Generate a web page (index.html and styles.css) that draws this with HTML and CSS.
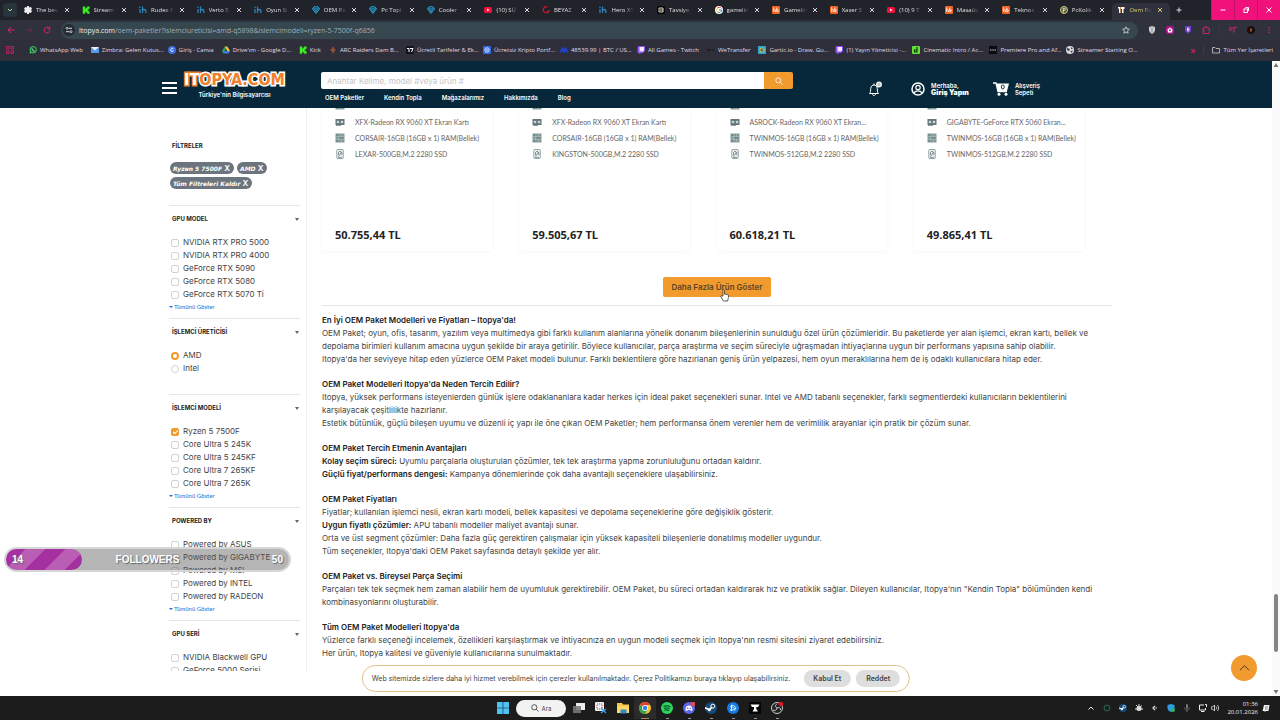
FILE: index.html
```html
<!DOCTYPE html>
<html lang="tr">

<head>
    <meta charset="utf-8">
    <title>Oem Paketler</title>
    <link rel="stylesheet" href="styles.css">
</head>

<body>
    <!-- shared icons -->
    <svg class="defs">
        <symbol id="ih" viewBox="0 0 8 8"><path d="M1 3v4M3.500 .5v6.500M3.500 4.500c.6-1.300 3.300-1.500 3.300.3V7" fill="none" stroke="#2b83b8" stroke-width="1.300"/><circle cx="1" cy="1.200" r=".8" fill="#2b83b8"/></symbol>
        <symbol id="gem" viewBox="0 0 8 8"><path d="M2 .8h4l1.500 2L4 7.500.5 2.800z" fill="#16384a" stroke="#2f9fd0"/><path d="M.5 2.800h7M2.500 3L4 6l1.500-3" fill="none" stroke="#2f9fd0" stroke-width=".8"/></symbol>
        <symbol id="yt" viewBox="0 0 8 8"><rect y="1" width="8" height="6" rx="1.500" fill="#f1103c"/><path d="M3.200 2.600L5.500 4 3.200 5.400z" fill="#fff"/></symbol>
        <symbol id="hb" viewBox="0 0 8 8"><rect width="8" height="8" rx="1" fill="#f26322"/><path d="M1.700 1.500V6M1.700 4c1.500-1 1.800 0 1.800 2M4.800 1.500V6M4.800 3.800c2.300-.8 2.300 2.200 0 1.900" stroke="#fff" stroke-width=".8" fill="none"/></symbol>
        <symbol id="kick" viewBox="0 0 8 8"><path d="M.8.5h2.400v2h1v-1h1v-1h2.400v2.300h-1v1h-1v.6h1v1h1v2.300H5.200v-1h-1v-1h-1v2H.8z" fill="#3df01f"/></symbol>
        <symbol id="chrome" viewBox="0 0 16 16"><circle cx="8" cy="8" r="8" fill="#f2c431"/><path d="M8 8L1.100 4A8 8 0 0 1 14.900 4H8z" fill="#e43e30"/><path d="M8 8L1.100 4A8 8 0 0 0 8 16l3.500-6z" fill="#2fa24f"/><circle cx="8" cy="8" r="4" fill="#fff"/><circle cx="8" cy="8" r="3" fill="#3f7fe8"/></symbol>
        <symbol id="twitch" viewBox="0 0 8 8"><path d="M1.500 0H8v5L6 7H4L3 8H2V7H.5V1.500z" fill="#8d4df5"/><path d="M2.500 1H7v3.500L6 5.500H2.500z" fill="#f3eaff"/></symbol>
        <symbol id="cross" viewBox="0 0 8 8"><path d="M2 2l4 4M6 2L2 6" stroke="currentColor" fill="none"/></symbol>
        <symbol id="gpu" viewBox="0 0 10 10"><rect x=".5" y="2" width="9" height="6" fill="#63777c"/><path d="M1 8.500h5" stroke="#8b9a9d"/><circle cx="3" cy="5" r="1.300" fill="#cdd8d9"/><circle cx="7" cy="5" r="1.300" fill="#cdd8d9"/></symbol>
        <symbol id="ram" viewBox="0 0 10 10"><rect x=".5" y=".5" width="9" height="9" fill="#839a9b"/><path d="M0 3.500h10M0 6.500h10M3.500 1v8M6.500 1v8" stroke="#b4c4c3" stroke-width=".5"/><path d="M1.500 2h2M5 5h3M1.500 8h2" stroke="#5b7375"/></symbol>
        <symbol id="ssd" viewBox="0 0 10 10"><rect x="1.800" y=".5" width="6.500" height="9" rx=".8" fill="#edf1f1" stroke="#7e8f92" stroke-width=".8"/><path d="M3.500 6V3.500L5 2l1.800 1.500V6M6.500 3L3.500 7.500M3 8.300h4" fill="none" stroke="#63777c" stroke-width=".8"/></symbol>
        <symbol id="steam" viewBox="0 0 12 12"><circle cx="6" cy="6" r="6" fill="#164a78"/><circle cx="7.800" cy="4.200" r="2" fill="none" stroke="#fff"/><circle cx="4.300" cy="7.800" r="1.500" fill="#fff"/><path d="M0 5.800l4.500 2L7 5" stroke="#fff" stroke-width="1.600" fill="none"/></symbol>
    </svg>

    <div class="tabs">
        <button class="tab-search" aria-label="Sekme ara"><svg viewBox="0 0 8 8"><path d="M2 3l2 2 2-2" stroke="#c5d98c" fill="none"/></svg></button>
        <div class="tab-list">
            <div class="tab"><svg viewBox="0 0 8 8"><path d="M3 0h2v1.500L7 1l1 2-1 1 1 1.500L6.500 7 5 6.500V8H3V6.500L1 7 0 5l1-1-1-1.500L1.500 1 3 1.500z" fill="#eee"/></svg><span>The bes</span><button aria-label="Kapat"><svg><use href="#cross"/></svg></button></div>
            <div class="tab"><svg><use href="#kick"/></svg><span>Stream</span><button aria-label="Kapat"><svg><use href="#cross"/></svg></button></div>
            <div class="tab"><svg><use href="#ih"/></svg><span>Rudex P</span><button aria-label="Kapat"><svg><use href="#cross"/></svg></button></div>
            <div class="tab"><svg><use href="#ih"/></svg><span>Verto 5</span><button aria-label="Kapat"><svg><use href="#cross"/></svg></button></div>
            <div class="tab"><svg><use href="#ih"/></svg><span>Oyun Si</span><button aria-label="Kapat"><svg><use href="#cross"/></svg></button></div>
            <div class="tab"><svg><use href="#gem"/></svg><span>OEM Pa</span><button aria-label="Kapat"><svg><use href="#cross"/></svg></button></div>
            <div class="tab"><svg><use href="#gem"/></svg><span>Pc Topl</span><button aria-label="Kapat"><svg><use href="#cross"/></svg></button></div>
            <div class="tab"><svg><use href="#gem"/></svg><span>Cooler</span><button aria-label="Kapat"><svg><use href="#cross"/></svg></button></div>
            <div class="tab"><svg><use href="#yt"/></svg><span>(10) SÜ</span><button aria-label="Kapat"><svg><use href="#cross"/></svg></button></div>
            <div class="tab"><svg viewBox="0 0 8 8"><path d="M5.500 1A3 3 0 1 0 7 5L5 6M3 1l2-1" stroke="#d4142e" stroke-width="1.200" fill="none"/></svg><span>BEYAZ</span><button aria-label="Kapat"><svg><use href="#cross"/></svg></button></div>
            <div class="tab"><svg><use href="#ih"/></svg><span>Hero X1</span><button aria-label="Kapat"><svg><use href="#cross"/></svg></button></div>
            <div class="tab"><svg viewBox="0 0 8 8"><rect width="8" height="8" rx="2" fill="#000"/><path d="M2 2h4v4H2zM3 4h3" stroke="#e9dfc9" fill="none"/></svg><span>Tavsiye</span><button aria-label="Kapat"><svg><use href="#cross"/></svg></button></div>
            <div class="tab"><svg viewBox="0 0 8 8"><circle cx="4" cy="4" r="4" fill="#fff"/><path d="M6.500 2.500A2.700 2.700 0 0 0 2 2.500" stroke="#e43e30" fill="none"/><path d="M1.500 3v2" stroke="#f2c431"/><path d="M2 5.500a2.700 2.700 0 0 0 3.500.7" stroke="#2fa24f" fill="none"/><path d="M6 6l.8-2H4" stroke="#3f7fe8" fill="none"/></svg><span>gamelin</span><button aria-label="Kapat"><svg><use href="#cross"/></svg></button></div>
            <div class="tab"><svg><use href="#hb"/></svg><span>Gamelin</span><button aria-label="Kapat"><svg><use href="#cross"/></svg></button></div>
            <div class="tab"><svg><use href="#hb"/></svg><span>Xaser S</span><button aria-label="Kapat"><svg><use href="#cross"/></svg></button></div>
            <div class="tab"><svg><use href="#yt"/></svg><span>(10) 9 T</span><button aria-label="Kapat"><svg><use href="#cross"/></svg></button></div>
            <div class="tab"><svg><use href="#hb"/></svg><span>Masaüs</span><button aria-label="Kapat"><svg><use href="#cross"/></svg></button></div>
            <div class="tab"><svg><use href="#hb"/></svg><span>Teknoc</span><button aria-label="Kapat"><svg><use href="#cross"/></svg></button></div>
            <div class="tab"><svg viewBox="0 0 8 8"><circle cx="4" cy="4" r="3.500" fill="#55582e" stroke="#c9cc8d"/><path d="M3.300 6.500V2.300h1c1.500 0 1.500 2 0 2h-1" stroke="#fff" stroke-width=".8" fill="none"/></svg><span>PcKolik</span><button aria-label="Kapat"><svg><use href="#cross"/></svg></button></div>
            <div class="tab active"><svg viewBox="0 0 8 8"><path d="M1 1h2.500v6H2V2.500H1zM4 1h3.500v2H6.500v4H5V3H4z" fill="#fff"/><path d="M3.500 1v6" stroke="#ef7d21" stroke-width=".6"/></svg><span>Oem Pa</span><button aria-label="Kapat"><svg><use href="#cross"/></svg></button></div>
        </div>
        <button class="new-tab" aria-label="Yeni sekme"><svg viewBox="0 0 8 8"><path d="M4 1.500v5M1.500 4h5" stroke="#ddd"/></svg></button>
        <div class="win-btns">
            <button aria-label="Küçült"><svg viewBox="0 0 8 8"><path d="M1.500 4h5" stroke="#fff"/></svg></button>
            <button aria-label="Önceki boyut"><svg viewBox="0 0 8 8"><rect x="2" y="3" width="3.500" height="3.500" fill="none" stroke="#fff"/><path d="M3.500 1.500h3v3.500" fill="none" stroke="#fff"/></svg></button>
            <button aria-label="Kapat"><svg viewBox="0 0 8 8"><path d="M1.500 1.500l5 5M6.500 1.500l-5 5" stroke="#fff"/></svg></button>
        </div>
    </div>

    <div class="toolbar">
        <button aria-label="Geri"><svg viewBox="0 0 8 8"><path d="M7.500 4H1M4 1L1 4l3 3" stroke="#e0226a" fill="none"/></svg></button>
        <button aria-label="İleri"><svg viewBox="0 0 8 8"><path d="M.5 4H7M4 1l3 3-3 3" stroke="#6b2a4a" fill="none"/></svg></button>
        <button aria-label="Yenile"><svg viewBox="0 0 8 8"><path d="M6.800 4.500A2.900 2.900 0 1 1 6 2M6.800.5V3H4.300" stroke="#e0226a" fill="none"/></svg></button>
        <div class="omnibox">
            <svg class="site-info" viewBox="0 0 12 12"><circle cx="6" cy="6" r="6" fill="#232b33"/><path d="M5.500 4.300H9M3 7.700h3.500" stroke="#ddd"/><circle cx="4" cy="4.300" r="1" fill="none" stroke="#ddd" stroke-width=".8"/><circle cx="8" cy="7.700" r="1" fill="none" stroke="#ddd" stroke-width=".8"/></svg>
            <span class="url"><b>itopya.com</b>/oem-paketler?islemciureticisi=amd-q5898&amp;islemcimodeli=ryzen-5-7500f-q6856</span>
            <svg class="star" viewBox="0 0 8 8"><path d="M4 .8l1 2.200 2.400.2-1.800 1.600.5 2.400L4 6 1.900 7.200l.5-2.400L.6 3.200 3 3z" fill="none" stroke="#ddd" stroke-width=".8"/></svg>
        </div>
        <div class="extensions">
            <svg viewBox="0 0 8 8"><path d="M4 0l3 1v3c0 2-1.500 3.300-3 4-1.500-.7-3-2-3-4V1z" fill="#c9ccd0"/><path d="M4 1v6" stroke="#92979c"/></svg>
            <svg viewBox="0 0 8 8"><rect width="8" height="8" rx="2" fill="#b3128c"/><path d="M1.500 3.500L4 1.500l2.500 2-.5 3H2z" fill="#fff"/><circle cx="4" cy="4.300" r="1" fill="#b3128c"/></svg>
            <svg viewBox="0 0 8 8"><path d="M1 0h6v5L4 8 1 5z" fill="#6a3ec9"/><path d="M5.500 2h-2v3h2M3.500 3.500h2" stroke="#fff" fill="none" stroke-width=".8"/></svg>
            <svg viewBox="0 0 8 8"><path d="M1 2h2V.8h2V2h2v2h.7v1.500H7v2H1V5.300h1V4H1z" fill="none" stroke="#e0226a" stroke-width=".9"/></svg>
            <i class="bar"></i>
            <svg viewBox="0 0 8 8"><path d="M0 2h4M0 4h3M5 6V1.500h2.500M4 6h1" stroke="#e0226a" fill="none"/></svg>
            <svg viewBox="0 0 8 8"><circle cx="4" cy="4" r="4" fill="#170e0e"/><path d="M4 1.500l1 2-1 3-1-2z" fill="#d5512c"/></svg>
            <svg viewBox="0 0 8 8"><path d="M4 1v1.200M4 3.400v1.200M4 5.800V7" stroke="#e0226a" stroke-width="1.200"/></svg>
        </div>
    </div>

    <div class="bookmarks">
        <svg class="apps" viewBox="0 0 8 8"><path d="M.5.500h2.500v2.500H.5zM5 .5h2.500v2.500H5zM.5 5h2.500v2.500H.5zM5 5h2.500v2.500H5z" fill="none" stroke="#c0205e"/></svg>
        <a href="#"><svg viewBox="0 0 8 8"><circle cx="4.200" cy="3.800" r="3.200" fill="#174d2b" stroke="#3bd366"/><path d="M.5 7.700l.8-2.500 1.500 1.500z" fill="#3bd366"/><path d="M3 2.500c0 1.500 1 2.500 2.500 2.700" stroke="#fff" fill="none"/></svg>WhatsApp Web</a>
        <a href="#" class="wide"><svg viewBox="0 0 8 8"><rect y="1" width="8" height="6" fill="#5899e8"/><path d="M0 1l4 3.500L8 1z" fill="#e8f0fb"/></svg>Zimbra: Gelen Kutus...</a>
        <a href="#"><svg viewBox="0 0 8 8"><circle cx="4" cy="4" r="4" fill="#3b70e4"/><path d="M5.500 3c-1.500-2-3 0-2.700 1.500.3 1.500 2 1.200 2.700 0" stroke="#fff" fill="none"/></svg>Giriş - Canva</a>
        <a href="#" class="wide"><svg viewBox="0 0 8 8"><path d="M2.700.5h2.600L8 5H5.300z" fill="#f6c332"/><path d="M2.700.5L0 5l1.300 2.500L4 3z" fill="#25a35a"/><path d="M1.300 7.500L2.700 5H8L6.700 7.500z" fill="#437ce8"/></svg>Drive'ım - Google D...</a>
        <a href="#"><svg><use href="#kick"/></svg>Kick</a>
        <a href="#" class="wide"><svg viewBox="0 0 8 8"><path d="M4 0l1.500 3L7 4 5.500 5 4 8 2.500 5 1 4l1.500-1z" fill="#94502f"/></svg>ARC Raiders Dam B...</a>
        <a href="#" class="wide"><svg viewBox="0 0 8 8"><rect width="8" height="8" rx="1" fill="#11151d"/><path d="M1 2.500h2V6M4 2.500h3L5.500 6" stroke="#fff" fill="none"/></svg>Ücretli Tarifeler &amp; Ek...</a>
        <a href="#" class="wide"><svg viewBox="0 0 8 8"><rect width="8" height="8" rx="1" fill="#3468e8"/><circle cx="4" cy="4" r="2.200" fill="none" stroke="#dce7ff"/><circle cx="4" cy="4" r=".8" fill="#fff"/></svg>Ücretsiz Kripto Portf...</a>
        <a href="#" class="wide"><svg viewBox="0 0 8 8"><path d="M.5 6.500l2-4 1.500 3 1.500-3 2 4" stroke="#1d45dd" stroke-width="1.800" fill="none"/></svg>48539.99 | BTC / US...</a>
        <a href="#"><svg><use href="#twitch"/></svg>All Games - Twitch</a>
        <a href="#"><svg viewBox="0 0 8 8"><path d="M0 3l1 2 1-2 1 2 1-2M5 4h2.500" stroke="#191b24" fill="none"/></svg>WeTransfer</a>
        <a href="#" class="wide"><svg viewBox="0 0 8 8"><rect width="8" height="8" fill="#29a6d1"/><circle cx="4" cy="4" r="2.500" fill="#f3c22e"/><path d="M5.500 3H3v2h2V4" stroke="#1d5687" fill="none"/></svg>Gartic.io - Draw, Gu...</a>
        <a href="#" class="wide"><svg><use href="#twitch"/></svg>(1) Yayın Yöneticisi -...</a>
        <a href="#" class="wide"><svg viewBox="0 0 8 8"><rect width="8" height="8" rx="1" fill="#62e336"/><path d="M5 1v5H2.500V4H5" stroke="#123a0d" stroke-width="1.200" fill="none"/></svg>Cinematic Intro / Ac...</a>
        <a href="#" class="wide"><svg viewBox="0 0 8 8"><rect width="8" height="8" fill="#090a10"/><path d="M1 4h1.500M3.300 4h1.400M5.500 4H7" stroke="#ddd"/></svg>Premiere Pro and Af...</a>
        <a href="#" class="wide"><svg viewBox="0 0 8 8"><circle cx="4" cy="4" r="4" fill="#d6d8dc"/><path d="M1 2l2 .5L4 4 2.500 5 1 4zM5 1l2 2H5zM4.500 5L7 4.500 5.500 7z" fill="#42464f"/></svg>Streamer Starting O...</a>
        <span class="more-bm">»</span>
        <i class="bar"></i>
        <a href="#" class="last"><svg viewBox="0 0 8 8"><path d="M.5 1.500h2.500l1 1h3.500V7h-7z" fill="none" stroke="#ccc" stroke-width=".8"/></svg>Tüm Yer İşaretleri</a>
    </div>

    <div class="viewport">
        <div class="page">
            <header>
                <button class="menu" aria-label="Menü"><i></i><i></i><i></i></button>
                <a href="#" class="logo"><span class="logo-name"><em>IT</em>OPYA.COM</span><span class="slogan">Türkiye'nin Bilgisayarcısı</span></a>
                <div class="search-col">
                    <form class="search">
                        <input type="text" aria-label="Ara" placeholder="Anahtar Kelime, model #veya ürün #">
                        <button type="button" aria-label="Ara"><svg viewBox="0 0 8 8"><circle cx="3.300" cy="3.300" r="2.500" fill="none" stroke="#fff" stroke-width=".8"/><path d="M5.200 5.200l2.300 2.300" stroke="#fff" stroke-width=".8"/></svg></button>
                    </form>
                    <nav>
                        <a href="#">OEM Paketler</a>
                        <a href="#">Kendin Topla</a>
                        <a href="#">Mağazalarımız</a>
                        <a href="#">Hakkımızda</a>
                        <a href="#">Blog</a>
                    </nav>
                </div>
                <div class="actions">
                    <svg class="bell" viewBox="0 0 16 16"><path d="M2.500 12.500c1.500-1.500 1-3 1.200-5C4 5 5.500 4 7 4s3 1 3.300 3.500c.2 2-.3 3.500 1.200 5zM5.500 13c.3 2 2.700 2 3 0M7 4V2.500" fill="none" stroke="#fff"/><circle cx="12" cy="3.500" r="3" fill="#e8edef"/><circle cx="12" cy="3.500" r="1" fill="none" stroke="#8b9aa2" stroke-width=".7"/></svg>
                    <a href="#" class="login"><svg viewBox="0 0 14 14"><circle cx="7" cy="7" r="6" fill="none" stroke="#fff" stroke-width="1.500"/><circle cx="7" cy="5.500" r="2.200" fill="none" stroke="#fff" stroke-width="1.200"/><path d="M3 11c1.500-2.800 6.500-2.800 8 0" fill="none" stroke="#fff" stroke-width="1.200"/></svg><span>Merhaba,<br><b>Giriş Yapın</b></span></a>
                    <a href="#" class="basket"><svg viewBox="0 0 16 14"><path d="M0 1h3l2 8.500h9" fill="none" stroke="#fff" stroke-width="1.400"/><path d="M3.500 1.500H16L14 9H5z" fill="#fff"/><circle cx="6" cy="12.300" r="1.500" fill="#fff"/><circle cx="13" cy="12.300" r="1.500" fill="#fff"/><ellipse cx="9.800" cy="5" rx="1.500" ry="2" fill="none" stroke="#06283a" stroke-width=".9"/></svg><span>Alışveriş<br>Sepeti</span></a>
                </div>
            </header>

            <div class="container">
                <aside>
                    <h3 class="filter-title">FİLTRELER</h3>
                    <div class="tags">
                        <button>Ryzen 5 7500F <b>X</b></button>
                        <button>AMD <b>X</b></button>
                        <button>Tüm Filtreleri Kaldır <b>X</b></button>
                    </div>
                    <section>
                        <h3>GPU MODEL <i></i></h3>
                        <label><input type="checkbox">NVIDIA RTX PRO 5000</label>
                        <label><input type="checkbox">NVIDIA RTX PRO 4000</label>
                        <label><input type="checkbox">GeForce RTX 5090</label>
                        <label><input type="checkbox">GeForce RTX 5080</label>
                        <label><input type="checkbox">GeForce RTX 5070 Ti</label>
                        <a href="#" class="show-all">Tümünü Göster</a>
                    </section>
                    <section class="short">
                        <h3>İŞLEMCİ ÜRETİCİSİ <i></i></h3>
                        <label><input type="radio" name="cpu" checked>AMD</label>
                        <label><input type="radio" name="cpu">Intel</label>
                    </section>
                    <section>
                        <h3>İŞLEMCİ MODELİ <i></i></h3>
                        <label><input type="checkbox" checked>Ryzen 5 7500F</label>
                        <label><input type="checkbox">Core Ultra 5 245K</label>
                        <label><input type="checkbox">Core Ultra 5 245KF</label>
                        <label><input type="checkbox">Core Ultra 7 265KF</label>
                        <label><input type="checkbox">Core Ultra 7 265K</label>
                        <a href="#" class="show-all">Tümünü Göster</a>
                    </section>
                    <section>
                        <h3>POWERED BY <i></i></h3>
                        <label><input type="checkbox">Powered by ASUS</label>
                        <label><input type="checkbox">Powered by GIGABYTE</label>
                        <label><input type="checkbox">Powered by MSI</label>
                        <label><input type="checkbox">Powered by INTEL</label>
                        <label><input type="checkbox">Powered by RADEON</label>
                        <a href="#" class="show-all">Tümünü Göster</a>
                    </section>
                    <section>
                        <h3>GPU SERİ <i></i></h3>
                        <label><input type="checkbox">NVIDIA Blackwell GPU</label>
                        <label><input type="checkbox">GeForce 5000 Serisi</label>
                    </section>
                </aside>

                <main>
                    <div class="products">
                        <div class="card">
                            <ul>
                                <li class="cut"><svg><use href="#ram"/></svg></li>
                                <li><svg><use href="#gpu"/></svg>XFX-Radeon RX 9060 XT Ekran Kartı</li>
                                <li><svg><use href="#ram"/></svg>CORSAIR-16GB (16GB x 1) RAM(Bellek)</li>
                                <li><svg><use href="#ssd"/></svg>LEXAR-500GB,M.2 2280 SSD</li>
                            </ul>
                            <div class="price">50.755,44 TL</div>
                        </div>
                        <div class="card">
                            <ul>
                                <li class="cut"><svg><use href="#ram"/></svg></li>
                                <li><svg><use href="#gpu"/></svg>XFX-Radeon RX 9060 XT Ekran Kartı</li>
                                <li><svg><use href="#ram"/></svg>CORSAIR-16GB (16GB x 1) RAM(Bellek)</li>
                                <li><svg><use href="#ssd"/></svg>KINGSTON-500GB,M.2 2280 SSD</li>
                            </ul>
                            <div class="price">59.505,67 TL</div>
                        </div>
                        <div class="card">
                            <ul>
                                <li class="cut"><svg><use href="#ram"/></svg></li>
                                <li><svg><use href="#gpu"/></svg>ASROCK-Radeon RX 9060 XT Ekran...</li>
                                <li><svg><use href="#ram"/></svg>TWINMOS-16GB (16GB x 1) RAM(Bellek)</li>
                                <li><svg><use href="#ssd"/></svg>TWINMOS-512GB,M.2 2280 SSD</li>
                            </ul>
                            <div class="price">60.618,21 TL</div>
                        </div>
                        <div class="card">
                            <ul>
                                <li class="cut"><svg><use href="#ram"/></svg></li>
                                <li><svg><use href="#gpu"/></svg>GIGABYTE-GeForce RTX 5060 Ekran...</li>
                                <li><svg><use href="#ram"/></svg>TWINMOS-16GB (16GB x 1) RAM(Bellek)</li>
                                <li><svg><use href="#ssd"/></svg>TWINMOS-512GB,M.2 2280 SSD</li>
                            </ul>
                            <div class="price">49.865,41 TL</div>
                        </div>
                    </div>

                    <div class="load-more">
                        <button>Daha Fazla Ürün Göster
                            <svg class="cursor" viewBox="0 0 9 13"><path d="M3 7V1.500c0-1.300 1.500-1.300 1.500 0V5l3 .6c.8.200 1 .7 1 1.500 0 2-.5 2.500-.8 4.900H3.500C3 10.500 1.500 9.500.7 7.700c-.3-.9.800-1.200 1.300-.5z" fill="#fff" stroke="#333" stroke-width=".8"/></svg>
                        </button>
                    </div>

                    <article>
                        <h2>En İyi OEM Paket Modelleri ve Fiyatları – Itopya'da!</h2>
                        <p>OEM Paket; oyun, ofis, tasarım, yazılım veya multimedya gibi farklı kullanım alanlarına yönelik donanım bileşenlerinin sunulduğu özel ürün çözümleridir. Bu paketlerde yer alan işlemci, ekran kartı, bellek ve<br>depolama birimleri kullanım amacına uygun şekilde bir araya getirilir. Böylece kullanıcılar, parça araştırma ve seçim süreciyle uğraşmadan ihtiyaçlarına uygun bir performans yapısına sahip olabilir.<br>Itopya'da her seviyeye hitap eden yüzlerce OEM Paket modeli bulunur. Farklı beklentilere göre hazırlanan geniş ürün yelpazesi, hem oyun meraklılarına hem de iş odaklı kullanıcılara hitap eder.</p>
                        <h2>OEM Paket Modelleri Itopya'da Neden Tercih Edilir?</h2>
                        <p>Itopya, yüksek performans isteyenlerden günlük işlere odaklananlara kadar herkes için ideal paket seçenekleri sunar. Intel ve AMD tabanlı seçenekler, farklı segmentlerdeki kullanıcıların beklentilerini<br>karşılayacak çeşitlilikte hazırlanır.<br>Estetik bütünlük, güçlü bileşen uyumu ve düzenli iç yapı ile öne çıkan OEM Paketler; hem performansa önem verenler hem de verimlilik arayanlar için pratik bir çözüm sunar.</p>
                        <h2>OEM Paket Tercih Etmenin Avantajları</h2>
                        <p><b>Kolay seçim süreci:</b> Uyumlu parçalarla oluşturulan çözümler, tek tek araştırma yapma zorunluluğunu ortadan kaldırır.<br><b>Güçlü fiyat/performans dengesi:</b> Kampanya dönemlerinde çok daha avantajlı seçeneklere ulaşabilirsiniz.</p>
                        <h2>OEM Paket Fiyatları</h2>
                        <p>Fiyatlar; kullanılan işlemci nesli, ekran kartı modeli, bellek kapasitesi ve depolama seçeneklerine göre değişiklik gösterir.<br><b>Uygun fiyatlı çözümler:</b> APU tabanlı modeller maliyet avantajı sunar.<br>Orta ve üst segment çözümler: Daha fazla güç gerektiren çalışmalar için yüksek kapasiteli bileşenlerle donatılmış modeller uygundur.<br>Tüm seçenekler, Itopya'daki OEM Paket sayfasında detaylı şekilde yer alır.</p>
                        <h2>OEM Paket vs. Bireysel Parça Seçimi</h2>
                        <p>Parçaları tek tek seçmek hem zaman alabilir hem de uyumluluk gerektirebilir. OEM Paket, bu süreci ortadan kaldırarak hız ve pratiklik sağlar. Dileyen kullanıcılar, Itopya'nın "Kendin Topla" bölümünden kendi<br>kombinasyonlarını oluşturabilir.</p>
                        <h2>Tüm OEM Paket Modelleri Itopya'da</h2>
                        <p>Yüzlerce farklı seçeneği incelemek, özellikleri karşılaştırmak ve ihtiyacınıza en uygun modeli seçmek için Itopya'nın resmi sitesini ziyaret edebilirsiniz.<br>Her ürün, Itopya kalitesi ve güveniyle kullanıcılarına sunulmaktadır.</p>
                    </article>
                </main>
            </div>

            <div class="cookie">
                <p>Web sitemizde sizlere daha iyi hizmet verebilmek için çerezler kullanılmaktadır. Çerez Politikamızı buraya tıklayıp ulaşabilirsiniz.</p>
                <button>Kabul Et</button>
                <button>Reddet</button>
            </div>
            <button class="to-top" aria-label="Yukarı"><svg viewBox="0 0 12 8"><path d="M1 6.500l5-5 5 5" fill="none" stroke="#333"/></svg></button>
        </div>
        <div class="scrollbar">
            <svg viewBox="0 0 8 8"><path d="M4 2l2.500 4h-5z" fill="#777"/></svg>
            <i class="thumb"></i>
            <svg viewBox="0 0 8 8"><path d="M4 6L1.500 2h5z" fill="#777"/></svg>
        </div>

        <!-- stream goal overlay -->
        <div class="goal">
            <div class="goal-fill"></div>
            <span>14</span><span>FOLLOWERS</span><span>50</span>
        </div>
    </div>

    <div class="taskbar">
        <div class="task-icons">
            <button aria-label="Başlat"><svg viewBox="0 0 12 12"><path d="M0 0h5.700v5.700H0zM6.300 0H12v5.700H6.300zM0 6.300h5.700V12H0zM6.300 6.300H12V12H6.300z" fill="#4cc2f5"/></svg></button>
            <button class="task-search"><svg viewBox="0 0 8 8"><circle cx="3.300" cy="3.300" r="2.600" fill="none" stroke="#333" stroke-width=".8"/><path d="M5.200 5.200l2.300 2.300" stroke="#333" stroke-width=".8"/></svg>Ara</button>
            <button aria-label="Görev görünümü"><svg viewBox="0 0 12 12"><rect x="3" y="1" width="9" height="7" fill="#eee"/><rect y="4" width="8" height="7" fill="#777" opacity=".9"/></svg></button>
            <button aria-label="Ekran Alıntısı"><svg viewBox="0 0 12 12"><rect width="9" height="9" rx="1" fill="#eee"/><path d="M2 2h5v5H2z" fill="none" stroke="#c83c50" stroke-dasharray="1"/><path d="M6 6l5 5M11 7l-5 4" stroke="#38a0dd" stroke-width="1.400"/></svg></button>
            <button aria-label="Dosya Gezgini"><svg viewBox="0 0 12 12"><path d="M0 1h5l1 1.500h6V11H0z" fill="#f6c749"/><path d="M0 4h12v7H0z" fill="#fbd766"/><rect x="3.500" y="7.500" width="6" height="4" fill="#2d8ad0"/></svg></button>
            <button class="current" aria-label="Chrome"><svg><use href="#chrome"/></svg></button>
            <button class="open" aria-label="Spotify"><svg viewBox="0 0 12 12"><circle cx="6" cy="6" r="6" fill="#27d75f"/><path d="M2.500 4.300c2.500-.8 5-.5 7 .6M3 6.300c2-.6 4-.4 5.700.6M3.500 8.200c1.600-.5 3.200-.3 4.500.4" stroke="#102b18" fill="none"/></svg></button>
            <button class="open" aria-label="Discord"><svg viewBox="0 0 12 12"><circle cx="6" cy="6" r="6" fill="#5d67ee"/><path d="M2.500 8.500C2.500 5 3.500 3.500 6 3.500s3.500 1.500 3.500 5L8 9l-.7-1H4.700L4 9z" fill="#fff"/><circle cx="4.700" cy="6.300" r=".8" fill="#5d67ee"/><circle cx="7.300" cy="6.300" r=".8" fill="#5d67ee"/><circle cx="10" cy="2" r="2.500" fill="#e4485a"/></svg></button>
            <button class="open" aria-label="Steam"><svg><use href="#steam"/></svg></button>
            <button class="open" aria-label="Battle.net"><svg viewBox="0 0 12 12"><circle cx="6" cy="6" r="6" fill="#157be0"/><path d="M4.500 9V3c3 .5 4 2 4.500 3-1 1.500-2.500 2.300-6 2M3 5c2-1 4.500.5 5 3.500" fill="none" stroke="#e4f4ff"/></svg></button>
            <button class="open" aria-label="Oyun"><svg viewBox="0 0 12 12"><rect width="12" height="12" rx="1" fill="#050505"/><path d="M1.500 2.500h9L9 5H7.300v2L9 9.500H3.500L5 7V5H3z" fill="#fff"/></svg></button>
            <button class="open" aria-label="OBS"><svg viewBox="0 0 12 12"><circle cx="6" cy="6" r="5.500" fill="#222" stroke="#ccc"/><path d="M6 6c-2-1-2-3 0-4M6 6c2-1.200 4 0 3.500 2M6 6c0 2-2.500 3.300-4 2" fill="none" stroke="#ccc"/><circle cx="9.800" cy="2" r="2.300" fill="#e81123"/></svg></button>
        </div>
        <div class="tray">
            <svg viewBox="0 0 8 8"><path d="M1.500 5.500L4 3l2.500 2.500" stroke="#eee" fill="none"/></svg>
            <svg viewBox="0 0 8 8"><circle cx="4" cy="4" r="3" fill="#17251f" stroke="#28634a"/></svg>
            <svg><use href="#steam"/></svg>
            <svg viewBox="0 0 8 8"><circle cx="4" cy="4.500" r="2.500" fill="#ddd"/><path d="M1 1l2 2M7 1.500L5 3M0 5h2M8 5H6M4 0v2" stroke="#ddd"/></svg>
            <svg viewBox="0 0 8 8"><path d="M4 2L2 4l2 2M4.500 4H6" stroke="#eee" stroke-width="1.200" fill="none"/></svg>
            <svg viewBox="0 0 8 8"><path d="M4 0l3.500 1v3c0 2-1.500 3-3.500 4C2 7 .5 6 .5 4V1z" fill="#2c9de0"/><circle cx="6" cy="6" r="2" fill="#34b455"/></svg>
            <svg viewBox="0 0 8 8"><rect x="3" y="0" width="2" height="5" rx="1" fill="#777"/><path d="M1.500 3.500c0 3.500 5 3.500 5 0M4 6v2" stroke="#777" fill="none" stroke-width=".8"/></svg>
            <svg viewBox="0 0 8 8"><path d="M5 1H.5v5h6V4M2 7.500h3.500M6 .5h1.500V3" stroke="#eee" fill="none"/></svg>
            <svg class="volume" viewBox="0 0 8 8"><path d="M0 3h1.500L3.500 1v6l-2-2H0zM5 2.500c1 1 1 2 0 3M6.500 1c1.500 2 1.500 4 0 6" stroke="#eee" fill="none" stroke-width=".8"/></svg>
            <div class="clock">01:36<br>20.01.2026</div>
            <svg viewBox="0 0 8 8"><path d="M2 1h5.500L6.500 7H4L2.500 8l.2-1H.5z" fill="#eee"/><path d="M3 3h3M3 5h2.500" stroke="#555" stroke-width=".7"/></svg>
        </div>
    </div>
</body>

</html>
```
FILE: styles.css
```css
* {
    box-sizing: border-box;
}

body {
    margin: 0;
    height: 100vh;
    display: flex;
    flex-direction: column;
    overflow: hidden;
    font-family: Inter, "Open Sans", sans-serif;
    font-size: 8px;
    color: #444;
    background: #fff;
}

a {
    color: inherit;
    text-decoration: none;
}

button {
    font: inherit;
    color: inherit;
    border: 0;
    padding: 0;
    background: none;
}

svg {
    display: block;
    flex: none;
    width: 8px;
    height: 8px;
}

.defs {
    position: absolute;
    width: 0;
    height: 0;
}

.bar {
    width: 1px;
    height: 8px;
    background: #4a3346;
}

/* browser */
.tabs, .toolbar, .bookmarks {
    display: flex;
    align-items: center;
    flex: none;
    font-family: "Open Sans", sans-serif;
    font-size: 6px;
    color: #e2dbe2;
}

.tabs {
    height: 20px;
    background: #20232a;
}

.tab-search {
    width: 14px;
    height: 14px;
    margin: 0 2px 0 3px;
    border-radius: 4px;
    background: #26343b;
    display: grid;
    place-items: center;
}

.tab-list {
    display: flex;
    flex: 1;
    min-width: 0;
    height: 100%;
}

.tab {
    flex: 1 1 0;
    min-width: 0;
    display: flex;
    align-items: center;
    padding: 0 6px 0 5px;
}

.tab span {
    flex: 1;
    min-width: 0;
    margin-left: 4px;
    white-space: nowrap;
    -webkit-mask-image: linear-gradient(90deg, #000 50%, transparent 85%);
}

.tab.active {
    margin-top: 3px;
    padding-bottom: 3px;
    border-radius: 5px 5px 0 0;
    background: #2f323d;
    color: #d8cf6c;
}

.new-tab {
    width: 17px;
    margin-right: 24px;
    display: grid;
    place-items: center;
}

.win-btns {
    display: flex;
    align-self: stretch;
}

.win-btns button {
    width: 23px;
    display: grid;
    place-items: center;
    background: #f0127a;
    border-left: 1px solid #c91166;
}

.toolbar {
    height: 20px;
    gap: 10px;
    padding: 0 7px;
    background: #2f323d;
}

.omnibox {
    flex: 1;
    height: 17px;
    padding: 0 8px 0 2px;
    display: flex;
    align-items: center;
    gap: 4px;
    border-radius: 9px;
    background: #37474f;
    font-size: 7px;
}

.site-info {
    width: 12px;
    height: 12px;
}

.url {
    flex: 1;
    color: #9fadb3;
}

.url b {
    font-weight: 400;
    color: #eee;
}

.extensions {
    display: flex;
    align-items: center;
    gap: 10px;
}

.extensions .bar {
    margin: 0 -1px;
}

.bookmarks {
    height: 21px;
    gap: 8px;
    padding: 0 7px 1px 6px;
    background: #2f2f3b;
    white-space: nowrap;
}

.bookmarks a {
    display: flex;
    align-items: center;
    gap: 3px;
}

.bookmarks .wide {
    width: 69px;
}

.apps {
    margin-right: 7px;
}

.more-bm {
    margin-left: auto;
    color: #e0226a;
    font-size: 10px;
}

/* site */
.viewport {
    flex: 1;
    min-height: 0;
    display: flex;
    position: relative;
}

.page {
    flex: 1;
    display: flex;
    flex-direction: column;
    position: relative;
    min-width: 0;
}

header {
    flex: none;
    height: 47px;
    padding: 0 232px 0 162px;
    display: flex;
    background: #06283a;
    color: #fff;
}

.menu {
    align-self: center;
    width: 15px;
    margin: 9px 8px 0 0;
}

.menu i {
    display: block;
    height: 2px;
    margin-bottom: 3px;
    background: #fff;
}

.logo {
    width: 99px;
    padding-top: 8px;
    display: flex;
    flex-direction: column;
    align-items: center;
    font-weight: 600;
}

.logo-name {
    font: 700 16px/21px "DejaVu Sans Condensed", "DejaVu Sans", sans-serif;
    color: #f0812c;
    -webkit-text-stroke: 3px #fff;
    paint-order: stroke fill;
}

.logo-name em {
    font-style: normal;
    color: #fff;
    -webkit-text-stroke: 3px #f0812c;
}

.slogan {
    font-size: 6px;
    line-height: 10px;
    white-space: nowrap;
}

.search-col {
    flex: 0 1 472px;
    margin-left: 37px;
    padding-top: 11px;
}

.search {
    display: flex;
    height: 17px;
}

.search input {
    flex: 1;
    min-width: 0;
    border: 0;
    padding: 0 6px;
    border-radius: 2px 0 0 2px;
    font: inherit;
    background: #fff;
}

.search input::placeholder {
    color: #c4c4c4;
}

.search button {
    width: 29px;
    display: grid;
    place-items: center;
    border-radius: 0 2px 2px 0;
    background: #f19a2e;
}

nav {
    display: flex;
    gap: 20px;
    margin: 4px 0 0 4px;
    font-size: 6px;
    line-height: 10px;
    font-weight: 600;
}

.actions {
    display: flex;
    align-items: center;
    margin-left: auto;
    padding-top: 8px;
    font-size: 6px;
    line-height: 7px;
    font-weight: 600;
}

.bell {
    width: 16px;
    height: 16px;
}

.login, .basket {
    display: flex;
    align-items: center;
    gap: 6px;
    margin-left: 28px;
}

.login b {
    font-size: 7px;
}

.login svg {
    width: 14px;
    height: 14px;
}

.basket {
    margin-left: 24px;
}

.basket svg {
    width: 16px;
    height: 14px;
}

.container {
    flex: 1;
    min-height: 0;
    display: flex;
    padding: 0 160px 25px 169px;
}

/* filters */
aside {
    flex: none;
    width: 138px;
    padding: 33px 6px 0 0;
    overflow: hidden;
    border-right: 1px solid #eee;
}

h3 {
    margin: 0;
    padding: 0 1px 0 3px;
    display: flex;
    justify-content: space-between;
    align-items: center;
    font-size: 6px;
    line-height: 10px;
    color: #222;
}

h3 i {
    border: 2px solid transparent;
    border-top: 3px solid #666;
    border-bottom: 0;
}

.tags {
    display: flex;
    flex-wrap: wrap;
    gap: 3px;
    margin: 11px 0 16px 1px;
}

.tags button {
    height: 12px;
    padding: 0 4px 0 3px;
    border-radius: 6px;
    background: #6c757d;
    color: #fff;
    font: italic 700 6px/12px "DejaVu Sans", sans-serif;
}

.tags b {
    font: 600 8px/12px Inter, sans-serif;
}

section {
    padding: 8px 0 7px;
    border-top: 1px solid #e6e6e6;
}

section h3 {
    margin-bottom: 12px;
}

.short {
    padding-bottom: 19px;
}

label {
    display: flex;
    align-items: center;
    gap: 4px;
    margin-left: 2px;
    line-height: 13px;
}

label input {
    appearance: none;
    width: 8px;
    height: 8px;
    margin: 0;
    border: 1px solid #d2d2d2;
    border-radius: 2px;
    background: #fff;
}

label input[type=radio] {
    border-radius: 50%;
}

label input[type=radio]:checked {
    border: 2px solid #f19a2e;
}

label input[type=checkbox]:checked {
    border-color: #f19a2e;
    background: #f19a2e;
    display: grid;
    place-items: center;
}

label input[type=checkbox]:checked::after {
    content: "";
    width: 4px;
    height: 2px;
    border: solid #fff;
    border-width: 0 0 1px 1px;
    transform: rotate(-45deg);
}

.show-all {
    display: flex;
    align-items: center;
    gap: 1px;
    margin-top: 2px;
    font: 6px/8px Lato, sans-serif;
    color: #1670e0;
}

.show-all::before {
    content: "";
    border: 2px solid transparent;
    border-top-color: #1670e0;
    border-bottom: 0;
}

/* products */
main {
    flex: 1;
    min-width: 0;
    padding-left: 15px;
}

.products {
    display: grid;
    grid-template-columns: repeat(4, 1fr);
    gap: 27px;
    padding-right: 28px;
}

.card {
    height: 143px;
    padding: 0 0 8px 13px;
    display: flex;
    flex-direction: column;
    justify-content: space-between;
    box-shadow: 0 1px 4px rgba(0, 0, 0, .04);
}

.card ul {
    margin: 0;
    padding: 0;
    list-style: none;
}

.card li {
    display: flex;
    align-items: center;
    gap: 10px;
    height: 16px;
    white-space: nowrap;
    font: 7px Lato, sans-serif;
    color: #666;
}

.card li svg {
    width: 10px;
    height: 10px;
}

.card .cut {
    height: 6px;
    align-items: flex-end;
    padding-bottom: 4px;
    overflow: hidden;
}

.price {
    font: 700 11px/16px "Open Sans", sans-serif;
    color: #222;
}

.load-more {
    padding: 26px 0 8px;
    text-align: center;
    border-bottom: 1px solid #e6e6e6;
}

.load-more button {
    position: relative;
    height: 20px;
    padding: 0 8px;
    border-radius: 2px;
    background: #f19a2e;
    color: #5c4524;
    font-weight: 600;
}

.cursor {
    position: absolute;
    left: 57px;
    top: 12px;
    width: 9px;
    height: 13px;
}

article {
    padding-top: 8px;
    line-height: 13px;
    white-space: nowrap;
}

article h2 {
    margin: 0;
    font-size: 8px;
    font-weight: 600;
    color: #222;
}

article p {
    margin: 0 0 12px;
}

article b {
    font-weight: 600;
    color: #222;
}

.cookie {
    position: absolute;
    left: 50%;
    bottom: 4px;
    transform: translateX(-50%);
    display: flex;
    align-items: center;
    gap: 5px;
    height: 27px;
    padding: 0 9px;
    border: 1px solid #e3c08c;
    border-radius: 14px;
    background: #fff;
    font-size: 7px;
    white-space: nowrap;
}

.cookie p {
    margin: 0 8px 0 0;
}

.cookie button {
    height: 17px;
    padding: 0 10px;
    border-radius: 9px;
    background: #dedede;
    font-weight: 600;
}

.to-top {
    position: absolute;
    right: 15px;
    bottom: 15px;
    width: 26px;
    height: 26px;
    border-radius: 50%;
    background: #f19a2e;
    display: grid;
    place-items: center;
}

.to-top svg {
    width: 11px;
}

.scrollbar {
    width: 8px;
    display: flex;
    flex-direction: column;
    background: #fafafa;
}

.thumb {
    width: 4px;
    height: 58px;
    margin: auto 2px 36px;
    border-radius: 2px;
    background: #858585;
}

.goal {
    position: absolute;
    left: 4px;
    bottom: 124px;
    width: 287px;
    height: 25px;
    padding: 0 6px;
    display: flex;
    justify-content: space-between;
    align-items: center;
    border: 2px solid #d6d6d6;
    border-radius: 13px;
    background: rgba(90, 90, 90, .45);
    color: #fff;
    font: 700 10px "Liberation Sans", Arial, sans-serif;
    text-shadow: 1px 1px 1px #666;
}

.goal span {
    position: relative;
}

.goal-fill {
    position: absolute;
    left: 0;
    top: 0;
    width: 27%;
    height: 100%;
    border-radius: 11px;
    background: repeating-linear-gradient(135deg, #a5309f 0 14px, #b95db5 14px 28px);
}

/* taskbar */
.taskbar {
    flex: none;
    height: 24px;
    display: grid;
    grid-template-columns: 1fr auto 1fr;
    align-items: center;
    background: #1c1c1c;
    color: #eee;
}

.task-icons {
    grid-column: 2;
    display: flex;
    align-items: center;
}

.task-icons button {
    width: 22px;
    height: 22px;
    display: grid;
    place-items: center;
    position: relative;
}

.task-icons svg {
    width: 12px;
    height: 12px;
}

.task-icons .task-search {
    width: 50px;
    height: 17px;
    margin: 0 2px;
    display: flex;
    align-items: center;
    justify-content: center;
    gap: 3px;
    border-radius: 9px;
    background: #f2f2f2;
    color: #444;
    font-size: 6px;
}

.task-icons .task-search svg {
    width: 8px;
    height: 8px;
}

.task-icons .current {
    background: #2b2b2b;
}

.open::after, .current::after {
    content: "";
    position: absolute;
    bottom: 0;
    width: 3px;
    height: 1px;
    background: #999;
}

.task-icons .current::after {
    width: 8px;
    background: #b08a4a;
}

.tray {
    display: flex;
    align-items: center;
    justify-content: flex-end;
    gap: 8px;
    padding-right: 10px;
}

.volume {
    margin-left: -4px;
}

.clock {
    margin-right: -4px;
    text-align: right;
    font: 6px/8px "Open Sans", sans-serif;
}
```
